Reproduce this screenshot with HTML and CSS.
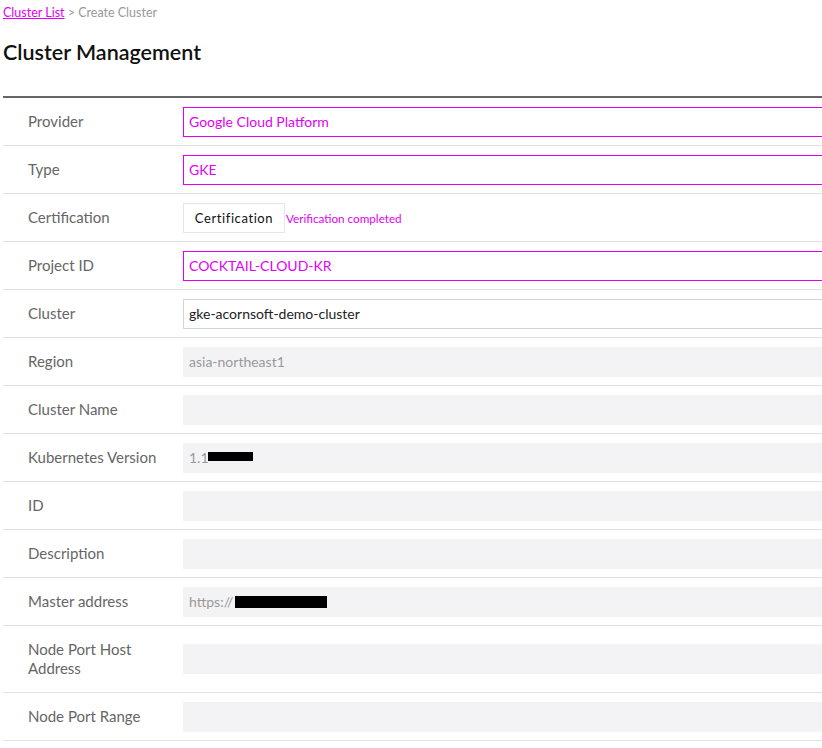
FILE: index.html
```html
<!DOCTYPE html>
<html>
<head>
<meta charset="utf-8">
<link rel="stylesheet" href="styles.css">
</head>
<body>
<div class="page">
  <div class="breadcrumb"><a href="#" class="crumb-link">Cluster List</a> &gt; Create Cluster</div>
  <h1 class="title">Cluster Management</h1>
  <div class="form">
    <div class="row">
      <div class="label">Provider</div>
      <div class="field"><div class="input input-select">Google Cloud Platform</div></div>
    </div>
    <div class="row">
      <div class="label">Type</div>
      <div class="field"><div class="input input-select">GKE</div></div>
    </div>
    <div class="row">
      <div class="label">Certification</div>
      <div class="field">
        <button class="btn">Certification</button>
        <span class="verified">Verification completed</span>
      </div>
    </div>
    <div class="row">
      <div class="label">Project ID</div>
      <div class="field"><div class="input input-select">COCKTAIL-CLOUD-KR</div></div>
    </div>
    <div class="row">
      <div class="label">Cluster</div>
      <div class="field"><div class="input input-text">gke-acornsoft-demo-cluster</div></div>
    </div>
    <div class="row">
      <div class="label">Region</div>
      <div class="field"><div class="input input-disabled">asia-northeast1</div></div>
    </div>
    <div class="row">
      <div class="label">Cluster Name</div>
      <div class="field"><div class="input input-disabled"></div></div>
    </div>
    <div class="row">
      <div class="label">Kubernetes Version</div>
      <div class="field"><div class="input input-disabled">1.1<span class="redact redact-ver"></span></div></div>
    </div>
    <div class="row">
      <div class="label">ID</div>
      <div class="field"><div class="input input-disabled"></div></div>
    </div>
    <div class="row">
      <div class="label">Description</div>
      <div class="field"><div class="input input-disabled"></div></div>
    </div>
    <div class="row">
      <div class="label">Master address</div>
      <div class="field"><div class="input input-disabled">https://<span class="redact redact-addr"></span></div></div>
    </div>
    <div class="row">
      <div class="label label-wrap">Node Port Host Address</div>
      <div class="field"><div class="input input-disabled"></div></div>
    </div>
    <div class="row">
      <div class="label">Node Port Range</div>
      <div class="field"><div class="input input-disabled"></div></div>
    </div>
  </div>
</div>
</body>
</html>
```

FILE: styles.css
```css
html, body {
  margin: 0;
  padding: 0;
  background: #fff;
  overflow: hidden;
}
body {
  font-family: "Lato", "Noto Sans", sans-serif;
  color: #222;
}
.page {
  padding: 5px 0 0 3px;
  width: 900px;
}
.breadcrumb {
  font-size: 12.5px;
  line-height: 16px;
  color: #999;
}
.crumb-link {
  color: #e000f5;
  text-decoration: underline;
}
.title {
  margin: 18px 0 0 0;
  font-size: 21.5px;
  line-height: 26px;
  font-weight: 600;
  color: #111;
}
.form {
  margin-top: 31px;
  border-top: 2px solid #666;
}
.row {
  display: flex;
  align-items: center;
  border-bottom: 1px solid #e2e2e2;
}
.label {
  width: 155px;
  flex: none;
  padding: 14px 0 14px 25px;
  font-size: 15px;
  line-height: 19px;
  color: #666;
}
.label-wrap {
  width: 115px;
  padding-right: 40px;
}
.field {
  flex: 1;
  display: flex;
  align-items: center;
}
.input {
  flex: 1;
  height: 30px;
  box-sizing: border-box;
  padding: 0 5px;
  display: flex;
  align-items: center;
  font-size: 14px;
}
.input-select {
  border: 1px solid #e000f5;
  color: #e000f5;
}
.input-text {
  border: 1px solid #cfd5df;
  color: #222;
}
.input-disabled {
  border: 1px solid #f3f3f6;
  background: #f3f3f6;
  color: #999;
}
.btn {
  height: 30px;
  width: 102px;
  box-sizing: border-box;
  border: 1px solid #e6e6e6;
  background: #fff;
  font-family: inherit;
  font-size: 13px;
  letter-spacing: 0.6px;
  color: #111;
  padding: 0;
}
.verified {
  margin-left: 1px;
  font-size: 11.7px;
  color: #e000f5;
}
.redact {
  display: inline-block;
  background: #000;
}
.redact-ver {
  width: 45px;
  height: 9px;
  margin-left: -1px;
  margin-top: -3px;
}
.redact-addr {
  width: 92px;
  height: 12px;
  margin-left: 2px;
  margin-top: 1px;
}
```
